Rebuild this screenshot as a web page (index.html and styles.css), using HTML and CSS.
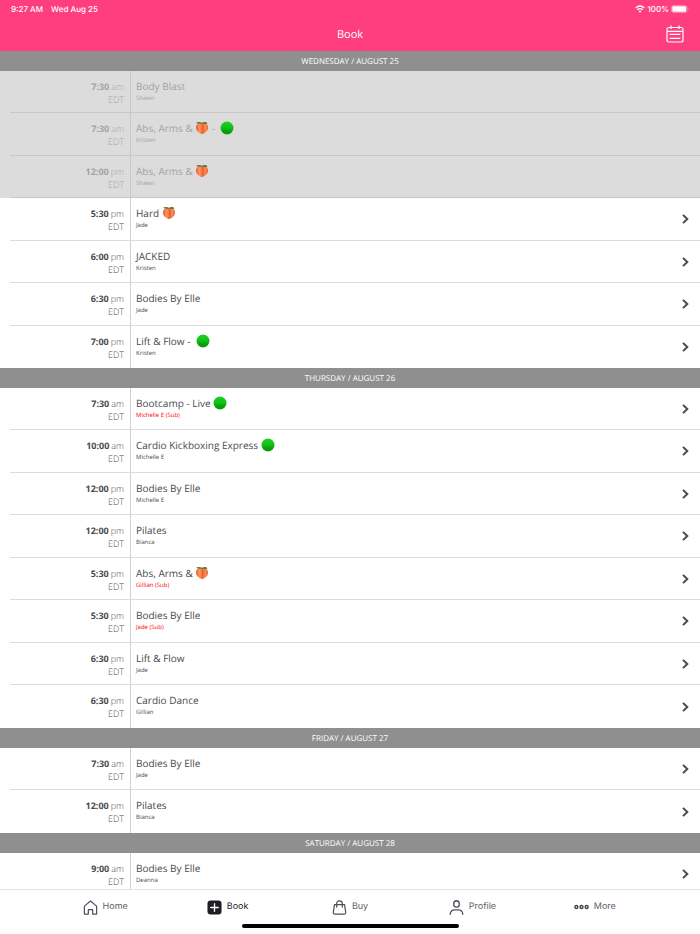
FILE: index.html
```html
<!DOCTYPE html>
<html lang="en">
<head>
    <meta charset="UTF-8">
    <meta name="viewport" content="width=device-width, initial-scale=1.0">
    <title>Book</title>
    <link rel="stylesheet" href="styles.css">
</head>
<body>

<!-- Shared icons -->
<svg class="icon-defs" aria-hidden="true">
    <defs>
        <linearGradient id="greenFill" x1="0" y1="0" x2="0" y2="1">
            <stop offset="0" stop-color="#1fd028"/>
            <stop offset="0.5" stop-color="#10c016"/>
            <stop offset="0.75" stop-color="#05a00a"/>
            <stop offset="1" stop-color="#109a14"/>
        </linearGradient>
        <linearGradient id="peachFill" x1="0" y1="0" x2="1" y2="0">
            <stop offset="0" stop-color="#ec5634"/>
            <stop offset="0.3" stop-color="#ff965c"/>
            <stop offset="0.55" stop-color="#ee6c3c"/>
            <stop offset="0.8" stop-color="#fb8a50"/>
            <stop offset="1" stop-color="#e45734"/>
        </linearGradient>
    </defs>
    <symbol id="green" viewBox="0 0 14 14">
        <circle cx="7" cy="7" r="6.5" fill="url(#greenFill)"/>
    </symbol>
    <symbol id="peach" viewBox="0 0 14 14">
        <path d="M7 2.200C3.600 1.200 1 3 1 6.500C1 10 4 12.400 7 13C10 12.400 13 10 13 6.500C13 3 10.400 1.200 7 2.200Z" fill="url(#peachFill)"/>
        <path d="M7 2.500C8.300 5 8.300 9.500 7 12.800" fill="none" stroke="#d4582f" stroke-width="0.600"/>
        <path d="M1 1.800C3 0.600 5.200 0.800 7 1.800C8.800 0.700 11.200 0.700 12.600 2.600C10.800 3.200 8.600 3 7 2.500C5 3 3 2.900 1 1.800Z" fill="#5c7330"/>
    </symbol>
    <symbol id="chevron" viewBox="0 0 7 10">
        <path d="M1 0.900L5.300 5L1 9.100" fill="none" stroke="#4a4a4a" stroke-width="2"/>
    </symbol>
</svg>

<header class="top-bar">
    <div class="status-bar">
        <span class="status-time">9:27 AM</span>
        <span class="status-date">Wed Aug 25</span>
        <svg class="wifi" viewBox="0 0 10 8" aria-hidden="true">
            <path d="M0.700 3Q5 -0.900 9.300 3M2.300 4.700Q5 2.400 7.700 4.700" fill="none" stroke="#fff" stroke-width="1.300"/>
            <path d="M3.500 6.100Q5 4.900 6.500 6.100L5 7.700Z" fill="#fff"/>
        </svg>
        <span>100%</span>
        <svg class="battery" viewBox="0 0 18 8" aria-hidden="true">
            <rect x="0.500" y="0.500" width="15.500" height="7" rx="2" fill="none" stroke="#fff" stroke-opacity="0.5" stroke-width="0.700"/>
            <rect x="1.300" y="1.300" width="13.900" height="5.400" rx="1" fill="#fff"/>
            <path d="M16.900 2.800Q18 4 16.900 5.200Z" fill="#fff" fill-opacity="0.6"/>
        </svg>
    </div>
    <div class="title-bar">
        <h1>Book</h1>
        <button class="calendar-button" type="button" aria-label="Calendar">
            <svg viewBox="0 0 18 18" aria-hidden="true">
                <g fill="none" stroke="#fff" stroke-width="1.200">
                    <rect x="1" y="2.500" width="16" height="14.500" rx="2"/>
                    <path d="M1 6.300H17M5 0.500V4M13 0.500V4M3.700 9.300H14.300M3.700 13.300H14.300"/>
                </g>
            </svg>
        </button>
    </div>
</header>

<main class="schedule" id="schedule"></main>

<nav class="tab-bar">
    <div class="tabs">
        <a class="tab" href="#home">
            <svg class="tab-icon" viewBox="0 0 16 16" aria-hidden="true">
                <path d="M1.500 6.500L8 1L14.500 6.500V15H10.300V10.200H5.700V15H1.500Z" fill="none" stroke="#50505c" stroke-width="1.300" stroke-linejoin="round"/>
            </svg>
            <span>Home</span>
        </a>
        <a class="tab active" href="#book" aria-current="page">
            <svg class="tab-icon" viewBox="0 0 16 16" aria-hidden="true">
                <rect x="0.500" y="0.500" width="15" height="15" rx="3.500" fill="#1e1f24"/>
                <path d="M8 4V12M4 8H12" stroke="#fff" stroke-width="1.400" stroke-linecap="round"/>
            </svg>
            <span>Book</span>
        </a>
        <a class="tab" href="#buy">
            <svg class="tab-icon" viewBox="0 0 16 16" aria-hidden="true">
                <path d="M2.600 5H13.400L14.600 13.200Q14.800 15 13 15H3Q1.200 15 1.400 13.200ZM5 7.500V4Q5 1 8 1Q11 1 11 4V7.500" fill="none" stroke="#50505c" stroke-width="1.300" stroke-linecap="round" stroke-linejoin="round"/>
            </svg>
            <span>Buy</span>
        </a>
        <a class="tab" href="#profile">
            <svg class="tab-icon" viewBox="0 0 16 16" aria-hidden="true">
                <path d="M1.300 15.200Q1.800 10.600 6 10.600H10Q14.200 10.600 14.700 15.200" fill="none" stroke="#50505c" stroke-width="1.400" stroke-linecap="round"/>
                <ellipse cx="8" cy="4.200" rx="3" ry="3.400" fill="none" stroke="#50505c" stroke-width="1.400"/>
            </svg>
            <span>Profile</span>
        </a>
        <a class="tab" href="#more">
            <svg class="tab-icon" viewBox="0 0 16 16" aria-hidden="true">
                <g fill="none" stroke="#44454f" stroke-width="1.500">
                    <circle cx="2.500" cy="7.500" r="1.600"/>
                    <circle cx="8" cy="7.500" r="1.600"/>
                    <circle cx="13.500" cy="7.500" r="1.600"/>
                </g>
            </svg>
            <span>More</span>
        </a>
    </div>
    <div class="home-indicator"></div>
</nav>

<script>
    // [time, am/pm, class name, instructor, flag]
    const days = [
        { title: 'WEDNESDAY / AUGUST 25', classes: [
            ['7:30', 'am', 'Body Blast', 'Shawn', 'past'],
            ['7:30', 'am', 'Abs, Arms & {peach} -  {green}', 'Kristen', 'past'],
            ['12:00', 'pm', 'Abs, Arms & {peach}', 'Shawn', 'past'],
            ['5:30', 'pm', 'Hard {peach}', 'Jade'],
            ['6:00', 'pm', 'JACKED', 'Kristen'],
            ['6:30', 'pm', 'Bodies By Elle', 'Jade'],
            ['7:00', 'pm', 'Lift & Flow -  {green}', 'Kristen']
        ] },
        { title: 'THURSDAY / AUGUST 26', classes: [
            ['7:30', 'am', 'Bootcamp - Live {green}', 'Michelle E (Sub)', 'sub'],
            ['10:00', 'am', 'Cardio Kickboxing Express {green}', 'Michelle E'],
            ['12:00', 'pm', 'Bodies By Elle', 'Michelle E'],
            ['12:00', 'pm', 'Pilates', 'Bianca'],
            ['5:30', 'pm', 'Abs, Arms & {peach}', 'Gillian (Sub)', 'sub'],
            ['5:30', 'pm', 'Bodies By Elle', 'Jade (Sub)', 'sub'],
            ['6:30', 'pm', 'Lift & Flow', 'Jade'],
            ['6:30', 'pm', 'Cardio Dance', 'Gillian']
        ] },
        { title: 'FRIDAY / AUGUST 27', classes: [
            ['7:30', 'am', 'Bodies By Elle', 'Jade'],
            ['12:00', 'pm', 'Pilates', 'Bianca']
        ] },
        { title: 'SATURDAY / AUGUST 28', classes: [
            ['9:00', 'am', 'Bodies By Elle', 'Deanna']
        ] }
    ];

    function className(text) {
        return text.replace(/&/g, '&amp;')
            .replace(/\{(\w+)\}/g, '<svg class="emoji" role="img" aria-label="$1"><use href="#$1"/></svg>');
    }

    function classRow([time, half, name, teacher, flag]) {
        const past = flag === 'past';
        const tag = past ? 'div' : 'a href="#class"';
        const chevron = past ? '' : '<svg class="chevron" aria-hidden="true"><use href="#chevron"/></svg>';
        return `<li class="${flag || ''}">
            <${tag} class="row">
                <span class="when"><span class="time"><b>${time}</b><span>${half}</span></span><span>EDT</span></span>
                <span class="what"><span class="name">${className(name)}</span><span class="teacher">${teacher}</span></span>
                ${chevron}
            </${past ? 'div' : 'a'}>
        </li>`;
    }

    document.getElementById('schedule').innerHTML = days.map(day => `
        <section>
            <h2>${day.title}</h2>
            <ul>${day.classes.map(classRow).join('')}</ul>
        </section>`).join('');
</script>

</body>
</html>
```
FILE: styles.css
```css
* {
    box-sizing: border-box;
}
body {
    margin: 0;
    height: 100vh;
    display: flex;
    flex-direction: column;
    font-family: "Open Sans", sans-serif;
    text-rendering: geometricPrecision;
    color: #4a4a4a;
    background-color: #fff;
}
a {
    color: inherit;
    text-decoration: none;
}
.icon-defs {
    position: absolute;
    width: 0;
    height: 0;
}
/* Header */
.top-bar {
    flex: none;
    background-color: #ff3e80;
    color: #fff;
}
.status-bar {
    display: flex;
    align-items: center;
    gap: 2px;
    height: 17px;
    padding: 0 11px;
    font-family: Inter, sans-serif;
    font-size: 8px;
    font-weight: 500;
}
.status-time {
    margin-right: 6px;
}
.status-date {
    margin-right: auto;
}
.wifi {
    width: 10px;
    height: 8px;
}
.battery {
    width: 18px;
    height: 8px;
}
.title-bar {
    display: grid;
    grid-template-columns: 1fr auto 1fr;
    align-items: center;
    height: 34px;
    padding: 0 16px;
}
.title-bar h1 {
    grid-column: 2;
    margin: 0;
    padding-top: 2px;
    font-size: 11px;
    line-height: 16px;
    font-weight: 400;
}
.calendar-button {
    justify-self: end;
    width: 18px;
    height: 18px;
    padding: 0;
    border: none;
    background: none;
    cursor: pointer;
}
.calendar-button svg {
    display: block;
}
/* Class list */
.schedule {
    flex: 1;
    min-height: 0;
    overflow-y: auto;
    scrollbar-width: none;
}
.schedule h2 {
    margin: 0;
    padding-top: 1px;
    font-size: 8px;
    line-height: 19px;
    font-weight: 400;
    text-align: center;
    color: #fff;
    background-color: #8f8f8f;
}
.schedule ul {
    margin: 0;
    padding: 0;
    list-style: none;
}
.schedule li {
    height: 42px;
    padding-left: 10px;
}
.schedule li:nth-child(even) {
    height: 43px;
}
.row {
    display: flex;
    height: 100%;
    padding-right: 11px;
    border-bottom: 1px solid #dcdcdc;
}
li:last-child .row {
    border-bottom: none;
}
.when {
    display: flex;
    flex-direction: column;
    width: 121px;
    padding: 9px 6px 0 0;
    border-right: 1px solid #d0d0d0;
    font-size: 9px;
    line-height: 13px;
    font-weight: 300;
    text-align: right;
}
.time {
    display: flex;
    justify-content: flex-end;
    gap: 2px;
}
.when b {
    font-weight: 700;
}
.what {
    display: flex;
    flex-direction: column;
    flex: 1;
    padding: 8px 5px 0;
}
.name {
    font-size: 10px;
    line-height: 15px;
    white-space: pre;
}
.emoji {
    width: 14px;
    height: 14px;
    vertical-align: -3px;
}
.teacher {
    font-size: 6px;
    line-height: 9px;
}
.sub .teacher {
    color: #f00;
}
.chevron {
    align-self: center;
    width: 7px;
    height: 10px;
}
.past {
    background-color: #dcdcdc;
    color: #a3a3a3;
}
.past .row {
    border-color: #c8c8c8;
}
.past .when {
    border-color: #c8c8c8;
}
/* Bottom tabs */
.tab-bar {
    flex: none;
    border-top: 1px solid #e4e4e4;
    background-color: #fff;
}
.tabs {
    display: flex;
    padding: 0 44px;
}
.tab {
    display: flex;
    flex: 1;
    align-items: center;
    justify-content: center;
    gap: 5px;
    height: 34px;
    font-family: Inter, sans-serif;
    font-size: 9px;
    line-height: 14px;
    color: #5d5e68;
}
.tab.active {
    color: #1e1f24;
}
.tab-icon {
    width: 15px;
    height: 15px;
}
.home-indicator {
    width: 31%;
    height: 4px;
    margin: 0 auto 6px;
    border-radius: 2px;
    background-color: #000;
}
```
